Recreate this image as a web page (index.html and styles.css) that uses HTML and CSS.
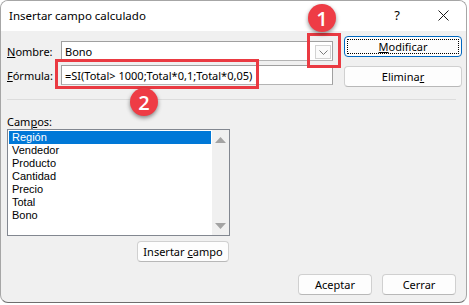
FILE: index.html
```html
<!DOCTYPE html>
<html lang="es">
<head>
  <meta charset="UTF-8" />
  <title>Insertar campo calculado</title>
  <link rel="stylesheet" href="styles.css">
</head>
<body>
  <div class="window">
    <div class="titlebar">
      <span class="title">Insertar campo calculado</span>
      <span class="tb-btn">?</span>
      <span class="tb-btn">
        <svg width="11" height="11" viewBox="0 0 11 11"><path d="M0.5 0.5L10.5 10.5M10.5 0.5L0.5 10.5" stroke="#1a1a1a" stroke-width="1" fill="none"/></svg>
      </span>
    </div>

    <div class="content">
      <div class="top">
        <div class="fields">
          <div class="row">
            <span class="lbl"><u>N</u>ombre:</span>
            <div class="input combo">
              <span>Bono</span>
              <span class="drop">
                <svg width="9" height="5" viewBox="0 0 9 5"><path d="M0.5 0.5L4.5 4.5L8.5 0.5" stroke="#7a7a7a" fill="none"/></svg>
              </span>
            </div>
          </div>
          <div class="row">
            <span class="lbl"><u>F</u>órmula:</span>
            <div class="input"><span>=SI(Total&gt; 1000;Total*0,1;Total*0,05)</span></div>
          </div>
        </div>
        <div class="actions">
          <button class="btn default"><span class="focus"><span><u>M</u>odificar</span></span></button>
          <button class="btn"><span>Elimina<u>r</u></span></button>
        </div>
      </div>

      <div class="sep"></div>

      <div class="campos">
        <div class="lbl">Cam<u>p</u>os:</div>
        <div class="listbox">
          <ul class="items">
            <li class="selected">Región</li>
            <li>Vendedor</li>
            <li>Producto</li>
            <li>Cantidad</li>
            <li>Precio</li>
            <li>Total</li>
            <li>Bono</li>
          </ul>
          <div class="scroll">
            <svg width="11" height="6" viewBox="0 0 11 6"><path d="M0 6L5.5 0L11 6Z" fill="#a3a3a3"/></svg>
            <svg width="11" height="6" viewBox="0 0 11 6"><path d="M0 0L5.5 6L11 0Z" fill="#a3a3a3"/></svg>
          </div>
        </div>
        <div class="insert-row">
          <button class="btn insert"><span>Insertar <u>c</u>ampo</span></button>
        </div>
      </div>

      <div class="footer">
        <button class="btn"><span>Aceptar</span></button>
        <button class="btn"><span>Cerrar</span></button>
      </div>
    </div>

    <div class="mark-box box-1"></div>
    <div class="mark-box box-2"></div>
    <div class="badge badge-1">1</div>
    <div class="badge badge-2">2</div>
  </div>
</body>
</html>
```

FILE: styles.css
```css
body {
  margin: 0;
  background: #ffffff;
  font-family: "Segoe UI", "Noto Sans", Arial, sans-serif;
  font-size: 11px;
  color: #000000;
}
.window {
  position: relative;
  width: 467px;
  height: 303px;
  box-sizing: border-box;
  border: 1px solid #a6a6a6;
  border-bottom-color: #6e6e6e;
  border-radius: 8px;
  overflow: hidden;
  background: #f0f0f0;
  display: flex;
  flex-direction: column;
}
.titlebar {
  height: 30px;
  background: #ffffff;
  display: flex;
  align-items: center;
}
.title {
  flex: 1;
  padding-left: 8px;
  padding-bottom: 2px;
  font-size: 11.5px;
}
.tb-btn {
  width: 46px;
  height: 30px;
  display: flex;
  align-items: center;
  justify-content: center;
  font-size: 13px;
  padding-bottom: 2px;
  box-sizing: border-box;
}
.content {
  flex: 1;
  padding: 0 6px;
  display: flex;
  flex-direction: column;
}
.top {
  display: flex;
  gap: 11px;
}
.fields {
  display: flex;
  flex-direction: column;
  gap: 4px;
  margin-top: 10px;
}
.row {
  display: flex;
  align-items: center;
}
.lbl {
  width: 54px;
}
.input {
  width: 272px;
  height: 20px;
  box-sizing: border-box;
  border: 1px solid #a0a0a0;
  border-bottom-color: #b4b4b4;
  background: #ffffff;
  padding: 0 3px;
  display: flex;
  align-items: center;
  white-space: nowrap;
}
.combo {
  justify-content: space-between;
  padding-right: 1px;
}
.drop {
  width: 16px;
  height: 14px;
  box-sizing: border-box;
  border: 1px solid #d2d2d2;
  background: #fbfbfb;
  display: flex;
  align-items: center;
  justify-content: center;
  margin-top: 2px;
}
.actions {
  display: flex;
  flex-direction: column;
  gap: 9px;
  margin-top: 5px;
}
.btn {
  font: inherit;
  color: #000000;
  width: 118px;
  height: 21px;
  padding: 0;
  box-sizing: border-box;
  border: 1px solid #d0d0d0;
  border-bottom-color: #b8b8b8;
  border-radius: 4px;
  background: #fdfdfd;
  display: flex;
  align-items: center;
  justify-content: center;
}
.default {
  border: 1px solid #0067c0;
  padding: 2px;
}
.focus {
  width: 100%;
  height: 100%;
  box-sizing: border-box;
  border: 1px dotted #000000;
  display: flex;
  align-items: center;
  justify-content: center;
}
.sep {
  height: 1px;
  background: #dcdcdc;
  margin: 12px 4px 0 0;
}
.campos {
  width: 223px;
  margin-top: 16px;
}
.campos .lbl {
  width: auto;
  line-height: 12px;
}
.listbox {
  margin-top: 1px;
  height: 107px;
  box-sizing: border-box;
  border: 1px solid #828790;
  background: #ffffff;
  display: flex;
}
.items {
  flex: 1;
  list-style: none;
  margin: 0;
  padding: 1px 1px 0 1px;
  font-family: "Liberation Sans", Arial, sans-serif;
  font-size: 11px;
}
.items li {
  height: 13px;
  line-height: 13px;
  padding-left: 3px;
}
.items .selected {
  background: #0078d7;
  color: #ffffff;
}
.scroll {
  width: 17px;
  background: #f0f0f0;
  display: flex;
  flex-direction: column;
  justify-content: space-between;
  align-items: center;
  padding: 7px 0 6px;
}
.insert-row {
  display: flex;
  justify-content: flex-end;
  margin-top: 5px;
}
.insert {
  width: 92px;
  margin-right: 1px;
}
.footer {
  display: flex;
  justify-content: flex-end;
  gap: 10px;
  margin-top: 12px;
  padding-right: 4px;
}
.footer .btn {
  width: 74px;
}
.mark-box {
  position: absolute;
  border: 3px solid #ea3a42;
  box-sizing: border-box;
}
.box-1 {
  left: 306px;
  top: 32px;
  width: 34px;
  height: 35px;
}
.box-2 {
  left: 54px;
  top: 58px;
  width: 204px;
  height: 30px;
}
.badge {
  position: absolute;
  width: 28px;
  height: 28px;
  border-radius: 50%;
  background: #ee3c45;
  color: #ffffff;
  font-family: "Open Sans", "Noto Sans", Arial, sans-serif;
  font-size: 20px;
  font-weight: 600;
  display: flex;
  align-items: center;
  justify-content: center;
  box-shadow: 0 2px 4px rgba(0,0,0,0.45);
}
.badge-1 {
  left: 307px;
  top: 3px;
}
.badge-2 {
  left: 129px;
  top: 87px;
}
```
